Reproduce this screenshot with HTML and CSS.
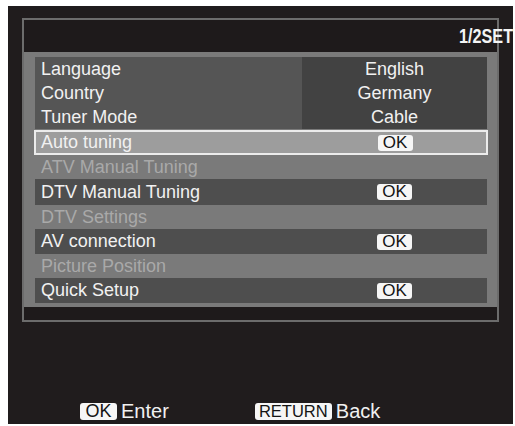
FILE: index.html
```html
<!DOCTYPE html>
<html>
<head>
<meta charset="utf-8">
<link rel="stylesheet" href="styles.css">
</head>
<body>
<div class="tv">
  <div class="panel">
    <div class="head"><span class="page">1/2SET</span></div>
    <div class="body">
      <div class="group">
        <div class="glabels">
          <div class="gl">Language</div>
          <div class="gl">Country</div>
          <div class="gl">Tuner Mode</div>
        </div>
        <div class="gvalues">
          <div class="gv">English</div>
          <div class="gv">Germany</div>
          <div class="gv">Cable</div>
        </div>
      </div>
      <div class="row sel h25"><span class="lbl">Auto tuning</span><span class="val"><span class="ok">OK</span></span></div>
      <div class="row off h24"><span class="lbl">ATV Manual Tuning</span><span class="val"></span></div>
      <div class="row dark h26"><span class="lbl">DTV Manual Tuning</span><span class="val"><span class="ok">OK</span></span></div>
      <div class="row off h24"><span class="lbl">DTV Settings</span><span class="val"></span></div>
      <div class="row dark h25"><span class="lbl">AV connection</span><span class="val"><span class="ok">OK</span></span></div>
      <div class="row off h24"><span class="lbl">Picture Position</span><span class="val"></span></div>
      <div class="row dark h25"><span class="lbl">Quick Setup</span><span class="val"><span class="ok">OK</span></span></div>
    </div>
    <div class="band"></div>
  </div>
  <div class="hints">
    <span class="key key-ok">OK</span><span class="hint">Enter</span>
    <span class="key key-ret">RETURN</span><span class="hint">Back</span>
  </div>
</div>
</body>
</html>
```
FILE: styles.css
```css
html, body {
  margin: 0;
  padding: 0;
  background: #ffffff;
}
body {
  font-family: "Liberation Sans", Arial, sans-serif;
  color: #f1f1f1;
}
.tv {
  margin: 6px 0 0 8px;
  width: 505px;
  height: 418px;
  box-sizing: border-box;
  padding-top: 12px;
  background: #201c1d;
}
.panel {
  margin-left: 14px;
  width: 477px;
  box-sizing: border-box;
  border: 2px solid #6c6c6c;
  background: #1e1a1b;
}
.head {
  height: 32px;
  display: flex;
  align-items: center;
  justify-content: flex-end;
  background: #1e1a1b;
}
.page {
  display: inline-block;
  font-weight: bold;
  font-size: 19.5px;
  color: #f4f4f4;
  margin-right: -16px;
  line-height: 20px;
  transform: scaleX(0.83);
  transform-origin: right center;
}
.body {
  background: #7a7a7a;
  padding: 5px 10px 4px 11px;
}
.group {
  display: grid;
  grid-template-columns: 267px 185px;
  height: 72px;
}
.glabels {
  background: #555555;
}
.gvalues {
  background: #424242;
}
.gl, .gv {
  height: 24px;
  line-height: 24px;
  font-size: 18px;
}
.gl {
  padding-left: 6px;
}
.gv {
  text-align: center;
}
.row {
  display: grid;
  grid-template-columns: 267px 185px;
  align-items: center;
  font-size: 18px;
  box-sizing: border-box;
}
.h24 { height: 24px; }
.h25 { height: 25px; }
.h26 { height: 26px; }
.lbl {
  padding-left: 6px;
  white-space: nowrap;
}
.val {
  display: flex;
  justify-content: center;
}
.sel {
  margin: 1px -1px 0 -1px;
  grid-template-columns: 266px 186px;
  border: 2px solid #ececec;
  background: #9d9d9d;
}
.sel .lbl {
  padding-left: 5px;
}
.dark {
  background: #4e4e4e;
}
.off {
  color: #a9a9a9;
}
.ok {
  display: block;
  width: 35px;
  height: 16px;
  line-height: 16px;
  border-radius: 3px;
  background: #f6f6f6;
  color: #141414;
  font-size: 17px;
  text-align: center;
}
.band {
  height: 13px;
  background: #1e1a1b;
}
.hints {
  margin-top: 79px;
  height: 20px;
  display: flex;
  align-items: center;
  padding-left: 72px;
}
.key {
  height: 17px;
  line-height: 17px;
  border-radius: 3px;
  background: #f6f6f6;
  color: #141414;
  text-align: center;
}
.key-ok {
  width: 37px;
  font-size: 18px;
}
.key-ret {
  width: 77px;
  font-size: 16.5px;
  margin-left: 86px;
}
.hint {
  font-size: 20px;
  line-height: 20px;
  margin-left: 4px;
  color: #f1f1f1;
}
```
